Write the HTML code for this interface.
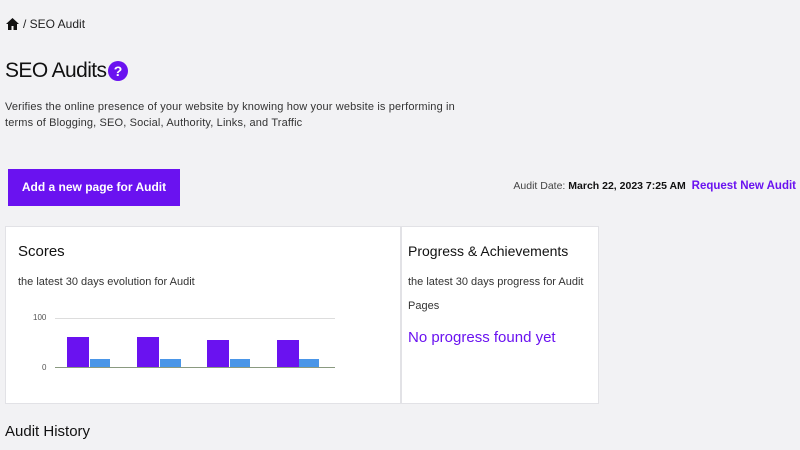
<!DOCTYPE html>
<html><head><style>
body{margin:0;width:800px;height:450px;background:#f2f2f4;font-family:"Liberation Sans",sans-serif;color:#222;position:relative;overflow:hidden}
.a{position:absolute;white-space:nowrap}
.card{position:absolute;background:#fff;border:1px solid #e2e2e6;box-sizing:border-box}
.bar{position:absolute}
.p{background:#6a12f0}.b{background:#4a96e8}
</style></head><body>
<svg class="a" style="left:6px;top:18px" width="13" height="12" viewBox="0 0 13 12"><path d="M6.5 0L0 6h2v6h3.5V8h2v4H11V6h2z" fill="#111"/></svg>
<div class="a" style="left:23px;top:17px;font-size:12px;color:#222">/ SEO Audit</div>
<div class="a" style="left:5px;top:59px;font-size:21px;letter-spacing:-0.6px;color:#111">SEO Audits</div>
<div class="a" style="left:108px;top:61px;width:20px;height:20px;border-radius:50%;background:#6a12f0;color:#fff;font-weight:bold;font-size:14px;text-align:center;line-height:20px">?</div>
<div class="a" style="left:5px;top:99px;font-size:11px;letter-spacing:0.15px;line-height:16px;color:#333">Verifies the online presence of your website by knowing how your website is performing in<br>terms of Blogging, SEO, Social, Authority, Links, and Traffic</div>
<div class="a" style="left:8px;top:169px;width:172px;height:37px;background:#6a12f0;color:#fff;font-size:12px;font-weight:bold;line-height:37px;text-align:center">Add a new page for Audit</div>
<div class="a" style="right:4px;top:180px;font-size:10.5px;color:#444">Audit Date: <b style="color:#111">March 22, 2023 7:25 AM</b>&nbsp;&nbsp;<b style="color:#6a12f0;font-size:11.5px">Request New Audit</b></div>
<div class="card" style="left:5px;top:226px;width:396px;height:178px">
<div class="a" style="left:12px;top:16px;font-size:15px;color:#111">Scores</div>
<div class="a" style="left:12px;top:49px;font-size:11px;color:#333">the latest 30 days evolution for Audit</div>
<div class="a" style="left:27px;top:86px;font-size:8px;color:#555">100</div>
<div class="a" style="left:36px;top:136px;font-size:8px;color:#555">0</div>
<div class="a" style="left:49px;top:91px;width:280px;height:1px;background:#ddd"></div>
<div class="bar p" style="left:61px;top:110px;width:22px;height:30px"></div><div class="bar b" style="left:84px;top:132px;width:20px;height:8px"></div>
<div class="bar p" style="left:131px;top:110px;width:22px;height:30px"></div><div class="bar b" style="left:154px;top:132px;width:21px;height:8px"></div>
<div class="bar p" style="left:201px;top:113px;width:22px;height:27px"></div><div class="bar b" style="left:224px;top:132px;width:20px;height:8px"></div>
<div class="bar p" style="left:271px;top:113px;width:22px;height:27px"></div><div class="bar b" style="left:293px;top:132px;width:20px;height:8px"></div>
<div class="a" style="left:49px;top:140px;width:280px;height:1px;background:#8a9a80"></div>
</div>
<div class="card" style="left:401px;top:226px;width:198px;height:178px">
<div class="a" style="left:6px;top:16px;font-size:14px;color:#111">Progress &amp; Achievements</div>
<div class="a" style="left:6px;top:49px;font-size:11px;color:#333">the latest 30 days progress for Audit</div>
<div class="a" style="left:6px;top:73px;font-size:11px;color:#333">Pages</div>
<div class="a" style="left:6px;top:102px;font-size:15px;color:#6a12f0">No progress found yet</div>
</div>
<div class="a" style="left:5px;top:423px;font-size:15px;color:#111">Audit History</div>
</body></html>
